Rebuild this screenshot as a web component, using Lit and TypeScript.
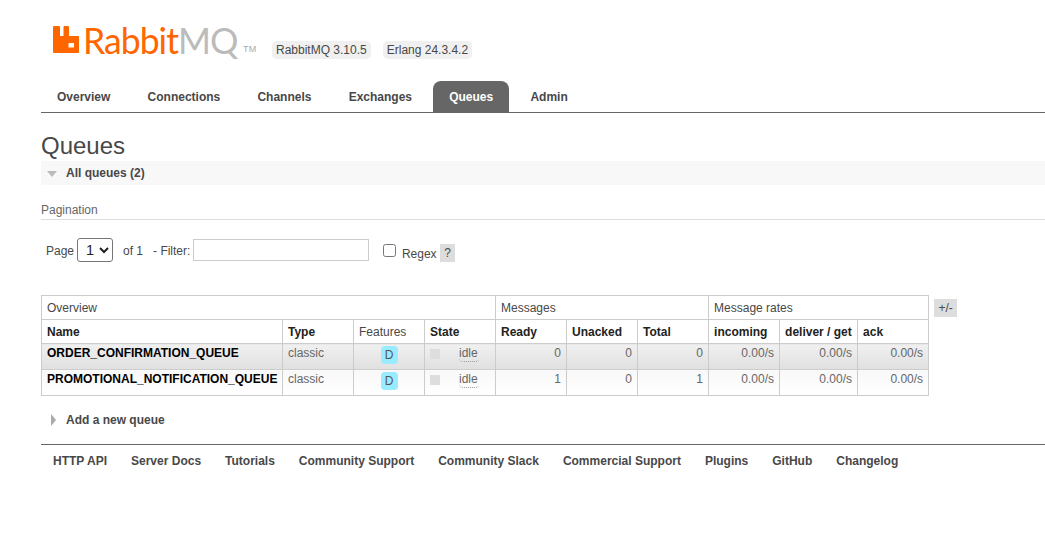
import { LitElement, html, css } from "lit";
import { customElement } from "lit/decorators.js";

const tabs = ["Overview", "Connections", "Channels", "Exchanges", "Queues", "Admin"];
const links = ["HTTP API", "Server Docs", "Tutorials", "Community Support", "Community Slack", "Commercial Support", "Plugins", "GitHub", "Changelog"];
const rows = [
  { name: "ORDER_CONFIRMATION_QUEUE", ready: 0, alt: "alt1" },
  { name: "PROMOTIONAL_NOTIFICATION_QUEUE", ready: 1, alt: "alt2" },
];

@customElement("app-root")
export class AppRoot extends LitElement {
  static styles = css`
    :host { display: block; height: 548px; overflow: hidden; background: #fff; color: #484848;
      font: 12px "Liberation Sans", Arial, sans-serif; }
    * { box-sizing: border-box; }
    .header { display: flex; align-items: flex-start; height: 81px; padding: 26px 0 0 53px; }
    .logo { display: flex; align-items: flex-start; height: 40px; width: 219px; }
    .logo svg { display: block; flex: none; }
    .wordmark { font: 400 37px/27px Lato, "Noto Sans", sans-serif; margin-left: 3.500px; letter-spacing: -1px; white-space: nowrap; color: #ff6600; transform: scaleX(0.96); transform-origin: left; }
    .wordmark .mq { color: #bbb; }
    .tm { font: 9px/9px "Liberation Sans", sans-serif; color: #aaa; margin: 19px 0 0 -0.500px; letter-spacing: 0.500px; }
    .badge { margin: 15px 0 0 0; height: 18px; line-height: 18px; padding: 0 4px; background: #f0f0f0; border-radius: 5px; white-space: nowrap; }
    .badge + .badge { margin-left: 12px; }
    .tabs { display: flex; margin: 0 0 0 41px; height: 32px; border-bottom: 1px solid #666; list-style: none; padding: 0; }
    .tab { padding: 9px 16px 0; margin-right: 5.200px; font-weight: bold; border-radius: 8px 8px 0 0; height: 31px; }
    .tab.on { background: #666; color: #fff; }
    h1 { margin: 17px 0 0 41px; font-size: 24px; font-weight: normal; line-height: 31px; height: 31px; }
    .section { margin-left: 41px; height: 24px; background: #f8f8f8; display: flex; align-items: center; font-weight: bold; }
    .tri-down { width: 0; height: 0; margin: 2px 8px 0 6px; border-left: 5.500px solid transparent; border-right: 5.500px solid transparent; border-top: 6px solid #bbb; }
    .label { margin-left: 1px; }
    .pag { margin: 18px 0 0 41px; height: 17px; line-height: 14px; border-bottom: 1px solid #ddd; color: #666; }
    .filter { display: flex; align-items: flex-start; height: 40px; margin: 18px 0 0 46px; }
    .filter span { white-space: nowrap; }
    .t1 { margin-top: 6px; }
    select { width: 36px; height: 24px; margin: 0 10px 0 3px; font: 14.500px "Liberation Sans", sans-serif; color: #222; background: #fff; border: 1px solid #767676; border-radius: 3px; padding-left: 4px; }
    .text { width: 176px; height: 22px; margin: 1px 14px 0 3px; border: 1px solid #ccc; background: #fff; }
    .of { margin-right: 10px; }
    .check { width: 13px; height: 13px; margin: 6px 5.500px 0 0; }
    .regex { margin-top: 9px; }
    .help { width: 15px; height: 18px; margin: 6px 0 0 3.500px; background: #ddd; text-align: center; line-height: 19px; }
    .tablewrap { display: flex; align-items: flex-start; margin: 17px 0 0 41px; }
    table { border-collapse: collapse; table-layout: fixed; width: 888px; flex: none; }
    th, td { border: 1px solid #ccc; padding: 0 5px; white-space: nowrap; text-align: left; }
    thead tr { height: 24px; }
    thead tr:first-child th { font-weight: normal; color: #484848; }
    thead tr:last-child th { color: #222; font-weight: bold; }
    thead tr:last-child th.plain { font-weight: normal; color: #484848; }
    tbody tr { height: 26px; }
    td { vertical-align: top; padding-top: 2px; line-height: 14px; color: #666; }
    td.name { color: #000; font-weight: bold; padding-right: 0; }
    td.r { text-align: right; }
    tr.alt1 td { background: linear-gradient(#f0f0f0, #e0e0e0); }
    tr.alt2 td { background: linear-gradient(#f8f8f8, #fff); }
    .c-name { width: 241px; } .c-n { width: 71px; } .c-del { width: 78px; }
    td.feat { text-align: center; }
    .d { display: inline-block; width: 17px; height: 18px; line-height: 18px; background: #99ebff; border-radius: 4px; color: #555; }
    .sq { width: 10px; height: 10px; background: #ddd; margin-top: 3px; flex: none; }
    .idle { margin-left: 19px; border-bottom: 1px dotted #999; border-radius: 0 0 4px 4px; height: 16px; line-height: 14px; padding-right: 1px; }
    .st-row { display: flex; align-items: flex-start; }
    .pm { margin: 4px 0 0 5px; width: 23px; height: 18px; line-height: 18px; text-align: center; background: #ddd; }
    .add { display: flex; align-items: center; height: 14px; margin: 17px 0 0 51px; font-weight: bold; }
    .tri-right { width: 0; height: 0; margin-right: 10px; border-top: 6px solid transparent; border-bottom: 6px solid transparent; border-left: 5px solid #aaa; }
    .foot { display: flex; gap: 24px; margin: 17px 0 0 41px; padding: 9px 0 0 12px; border-top: 1px solid #666; font-weight: bold; line-height: 14px; list-style: none; }
  `;

  render() {
    return html`
      <div class="header">
        <div class="logo">
          <svg width="26" height="27" viewBox="0 0 26 27"><path fill="#ff6600" fill-rule="evenodd" d="M1 0h5a1 1 0 0 1 1 1v9h3.500V1a1 1 0 0 1 1-1h3.500a1 1 0 0 1 1 1v9h9a1 1 0 0 1 1 1v15a1 1 0 0 1-1 1H1a1 1 0 0 1-1-1V1a1 1 0 0 1 1-1zM15.500 17.500v3.500a.5.5 0 0 0 .5.5h4.500a.5.5 0 0 0 .5-.5v-3.500a.5.5 0 0 0-.5-.5H16a.5.5 0 0 0-.5.5z"/></svg>
          <span class="wordmark">Rabbit<span class="mq">MQ</span></span>
          <span class="tm">TM</span>
        </div>
        <span class="badge">RabbitMQ 3.10.5</span>
        <span class="badge">Erlang 24.3.4.2</span>
      </div>
      <ul class="tabs">
        ${tabs.map((t) => html`<li class="tab ${t === "Queues" ? "on" : ""}">${t}</li>`)}
      </ul>
      <h1>Queues</h1>
      <div class="section"><i class="tri-down"></i><span class="label">All queues (2)</span></div>
      <div class="pag">Pagination</div>
      <div class="filter">
        <span class="t1">Page</span>
        <select><option>1</option></select>
        <span class="t1 of">of 1</span>
        <span class="t1">- Filter:</span>
        <input class="text" type="text" />
        <input class="check" type="checkbox" />
        <span class="regex">Regex</span>
        <span class="help">?</span>
      </div>
      <div class="tablewrap">
        <table>
          <colgroup>
            <col class="c-name" /><col class="c-n" /><col class="c-n" /><col class="c-n" />
            <col class="c-n" /><col class="c-n" /><col class="c-n" /><col class="c-n" /><col class="c-del" /><col class="c-n" />
          </colgroup>
          <thead>
            <tr><th colspan="4">Overview</th><th colspan="3">Messages</th><th colspan="3">Message rates</th></tr>
            <tr>
              <th>Name</th><th>Type</th><th class="plain">Features</th><th>State</th>
              <th>Ready</th><th>Unacked</th><th>Total</th>
              <th>incoming</th><th>deliver / get</th><th>ack</th>
            </tr>
          </thead>
          <tbody>
            ${rows.map((r) => html`
              <tr class="${r.alt}">
                <td class="name">${r.name}</td>
                <td>classic</td>
                <td class="feat"><span class="d">D</span></td>
                <td><div class="st-row"><i class="sq"></i><span class="idle">idle</span></div></td>
                <td class="r">${r.ready}</td>
                <td class="r">0</td>
                <td class="r">${r.ready}</td>
                <td class="r">0.00/s</td>
                <td class="r">0.00/s</td>
                <td class="r">0.00/s</td>
              </tr>`)}
          </tbody>
        </table>
        <span class="pm">+/-</span>
      </div>
      <div class="add"><i class="tri-right"></i>Add a new queue</div>
      <ul class="foot">${links.map((l) => html`<li>${l}</li>`)}</ul>
    `;
  }
}
